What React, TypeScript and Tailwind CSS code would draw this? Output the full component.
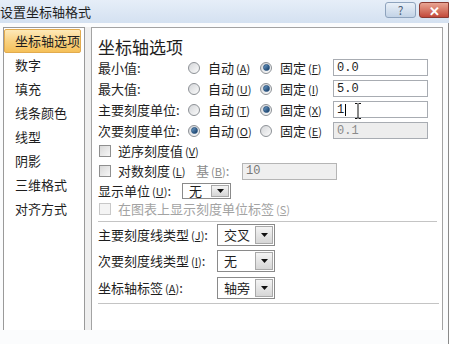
import React from 'react';

function K({ k }: { k: string }) {
  return (
    <span className="text-[11px] ml-[2px]">
      (<span className="underline">{k}</span>)
    </span>
  );
}

function Radio({ on }: { on?: boolean }) {
  return (
    <span className="w-[12px] h-[12px] rounded-full border border-[#8d9196] bg-gradient-to-br from-[#d4d6d9] to-[#fbfbfb] flex items-center justify-center shrink-0">
      {on && <span className="w-[7px] h-[7px] rounded-full bg-gradient-to-br from-[#6f9fcb] to-[#123a63] border border-[#2a5480]" />}
    </span>
  );
}

function Check({ disabled }: { disabled?: boolean }) {
  return (
    <span
      className={
        disabled
          ? 'block ml-[1px] mr-[7px] w-[12px] h-[12px] border border-[#c8c8c8] bg-[#f4f4f4] shrink-0'
          : 'block ml-[1px] mr-[7px] w-[12px] h-[12px] border border-[#8f8f8f] bg-gradient-to-br from-[#d9d9d9] to-[#f7f7f7] shrink-0'
      }
    />
  );
}

function Select({ value, small }: { value: string; small?: boolean }) {
  return (
    <div
      className={
        small
          ? 'w-[49px] h-[16px] border border-[#8a8a8a] bg-white flex items-stretch'
          : 'w-[58px] h-[22px] border border-[#8a8a8a] bg-white flex items-stretch'
      }
    >
      <span className="flex-1 pl-[6px] flex items-center text-[13px] text-[#1e1e1e]">{value}</span>
      <span className="w-[18px] m-[1px] border border-[#a9a9a9] bg-gradient-to-b from-[#f4f4f4] to-[#d6d6d6] flex items-center justify-center">
        <svg width="7" height="4" viewBox="0 0 7 4">
          <path d="M0 0h7L3.5 4z" fill="#111" />
        </svg>
      </span>
    </div>
  );
}

const nav = ['数字', '填充', '线条颜色', '线型', '阴影', '三维格式', '对齐方式'];

export default function App() {
  return (
    <div className="w-[449px] h-[344px] bg-[#fbfcfd] overflow-hidden flex flex-col font-['Noto_Sans_CJK_SC',sans-serif] text-[#1e1e1e]">
      {/* Title bar */}
      <div className="h-[23px] bg-gradient-to-b from-[#e6eef8] to-[#d4e1f1] flex items-center shrink-0">
        <span className="text-[13px] leading-none">设置坐标轴格式</span>
        <div className="ml-auto flex gap-[3px] self-start mt-[2px]">
          <span className="w-[31px] h-[16px] rounded-[3px] border border-[#8ea3bd] bg-gradient-to-b from-[#e9f0f8] to-[#c3d3e6] flex items-center justify-center text-[12px] leading-none text-[#4d5f77]">
            ?
          </span>
          <span className="w-[30px] h-[16px] rounded-l-[3px] border border-[#8a3a32] bg-gradient-to-b from-[#e8a493] to-[#c2483a] flex items-center justify-center text-[13px] font-bold leading-none text-white">
            ✕
          </span>
        </div>
      </div>

      {/* Body */}
      <div className="flex flex-1 pt-[4px] border-r border-[#8a8a8a]">
        {/* Left nav */}
        <div className="ml-[3px] w-[82px] border-l border-t border-r border-[#9a9a9a] bg-white h-[303px] pt-[1px]">
          <div className="w-[77px] h-[24px] rounded-[2px] border border-[#e2ab4e] bg-gradient-to-b from-[#fde9b8] via-[#f9d282] to-[#f5c058] flex items-center pl-[10px] text-[13px]">
            坐标轴选项
          </div>
          {nav.map((n) => (
            <div key={n} className="h-[24px] flex items-center pl-[11px] text-[13px]">
              {n}
            </div>
          ))}
        </div>

        <div className="w-[6px] h-[303px] bg-[#efefef]" />

        {/* Content panel */}
        <div className="w-[352px] h-[303px] border-l border-t border-r border-[#a3a3a3] bg-white pl-[6px] pr-[3px] flex flex-col text-[13px]">
          <div className="mt-[8px] h-[20px] flex items-center text-[17px] leading-none">坐标轴选项</div>

          {[
            { l: '最小值:', a: 'A', f: 'F', v: '0.0', auto: false },
            { l: '最大值:', a: 'U', f: 'I', v: '5.0', auto: false },
            { l: '主要刻度单位:', a: 'T', f: 'X', v: '1', auto: false },
            { l: '次要刻度单位:', a: 'O', f: 'E', v: '0.1', auto: true },
          ].map((r, i) => (
            <div key={r.l} className={i === 0 ? 'h-[21px] mt-[1px] flex items-center' : 'h-[21px] flex items-center'}>
              <span className="w-[90px]">{r.l}</span>
              <span className="w-[72px] flex items-center gap-[8px]">
                <Radio on={r.auto} />
                <span>
                  自动<K k={r.a} />
                </span>
              </span>
              <span className="w-[73px] flex items-center gap-[8px]">
                <Radio on={!r.auto} />
                <span>
                  固定<K k={r.f} />
                </span>
              </span>
              <span
                className={
                  r.auto
                    ? 'w-[95px] h-[17px] border border-[#a8acb2] bg-[#ededed] text-[#8a8a8a] pl-[3px] flex items-center font-["Liberation_Mono",monospace] text-[12px]'
                    : 'relative w-[95px] h-[17px] border border-[#a8acb2] bg-white pl-[3px] flex items-center font-["Liberation_Mono",monospace] text-[12px]'
                }
              >
                {r.v}
                {i === 2 && (
                  <>
                    <span className="w-px h-[12px] bg-black ml-[1px]" />
                    <svg className="absolute left-[20px] top-[1px]" width="8" height="16" viewBox="0 0 8 16">
                      <path d="M1 0.5h2.5M4.5 0.5H7M4 1v14M1 15.5h2.5M4.5 15.5H7" stroke="#111" strokeWidth="1" fill="none" />
                    </svg>
                  </>
                )}
              </span>
            </div>
          ))}

          <div className="h-[20px] flex items-center">
            <Check />
            逆序刻度值<K k="V" />
          </div>
          <div className="h-[20px] flex items-center">
            <Check />
            <span className="w-[78px]">
              对数刻度<K k="L" />
            </span>
            <span className="w-[46px] text-[#8a8a8a]">
              基<K k="B" />:
            </span>
            <span className="w-[95px] h-[17px] border border-[#b5b5b5] bg-[#efefef] text-[#777] pl-[3px] flex items-center font-['Liberation_Mono',monospace] text-[12px]">
              10
            </span>
          </div>
          <div className="h-[19px] flex items-center">
            <span className="w-[84px]">
              显示单位<K k="U" />:
            </span>
            <Select value="无" small />
          </div>
          <div className="h-[18px] flex items-center text-[#a3a3a3]">
            <Check disabled />
            在图表上显示刻度单位标签<K k="S" />
          </div>

          <div className="mt-[3px] h-px bg-[#c4c4c4] mr-[2px]" />

          {[
            { l: '主要刻度线类型', k: 'J', v: '交叉', h: 'h-[26px]' },
            { l: '次要刻度线类型', k: 'I', v: '无', h: 'h-[26px]' },
            { l: '坐标轴标签', k: 'A', v: '轴旁', h: 'h-[27px]' },
          ].map((r) => (
            <div key={r.l} className={r.h + ' flex items-center'}>
              <span className="w-[119px]">
                {r.l}
                <K k={r.k} />:
              </span>
              <Select value={r.v} />
            </div>
          ))}

          <div className="mt-[2px] h-px bg-[#c4c4c4]" />
        </div>
      </div>
    </div>
  );
}
